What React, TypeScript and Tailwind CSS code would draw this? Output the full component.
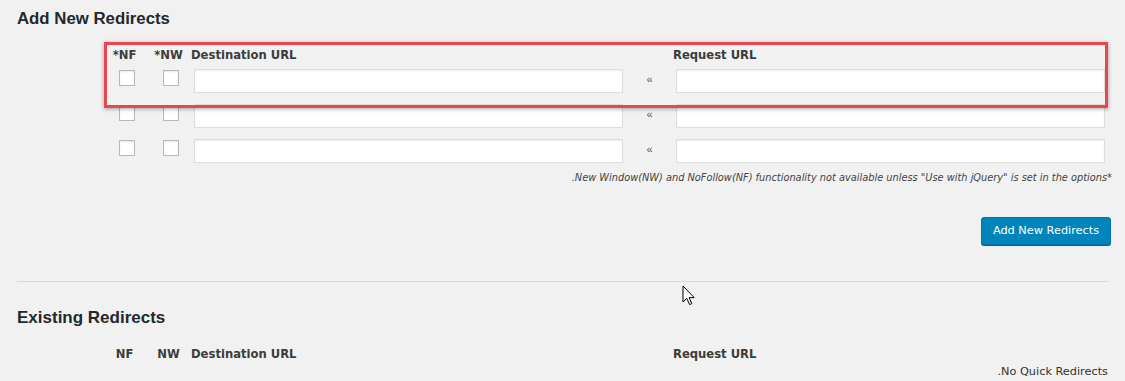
import type React from "react";

const FieldRow: React.FC = () => (
  <div className="flex items-start h-[24px]">
    <div className="w-[102px] shrink-0" />
    <input
      type="checkbox"
      className="appearance-none w-4 h-4 mt-[1px] shrink-0 border border-[#b4b9be] bg-white shadow-[inset_0_1px_2px_rgba(0,0,0,0.1)]"
    />
    <div className="w-[28px] shrink-0" />
    <input
      type="checkbox"
      className="appearance-none w-4 h-4 mt-[1px] shrink-0 border border-[#b4b9be] bg-white shadow-[inset_0_1px_2px_rgba(0,0,0,0.1)]"
    />
    <div className="w-[15px] shrink-0" />
    <input
      type="text"
      className="w-[429px] h-[24px] shrink-0 border border-[#ddd] bg-white shadow-[inset_0_1px_2px_rgba(0,0,0,0.07)] outline-none"
    />
    <div className="w-[53px] shrink-0 text-center text-[11px] leading-[20px] text-[#555] font-['Liberation_Sans',Arial,sans-serif]">«</div>
    <input
      type="text"
      className="w-[429px] h-[24px] shrink-0 border border-[#ddd] bg-white shadow-[inset_0_1px_2px_rgba(0,0,0,0.07)] outline-none"
    />
  </div>
);

const App: React.FC = () => {
  return (
    <div className="relative w-[1125px] h-[381px] overflow-hidden bg-[#f1f1f1] pl-[17px] pr-[14px] font-['DejaVu_Sans',sans-serif] text-[#444]">
      {/* Add new */}
      <h2 className="pt-[10px] h-[28px] text-[16.8px] leading-[18px] font-bold text-[#23282d] font-['Liberation_Sans',Arial,sans-serif]">
        Add New Redirects
      </h2>

      <div className="flex mt-[20px] h-[14px] text-[11.6px] leading-[14px] font-bold text-[#3c3c3c]">
        <div className="w-[88px] shrink-0" />
        <div className="w-[39px] shrink-0 text-center">*NF</div>
        <div className="w-[2px] shrink-0" />
        <div className="w-[45px] shrink-0 text-center">*NW</div>
        <div className="w-[482px] shrink-0">Destination URL</div>
        <div>Request URL</div>
      </div>

      <div className="flex flex-col gap-[11px] mt-[7px]">
        <FieldRow />
        <FieldRow />
        <FieldRow />
      </div>

      <p className="mt-[8px] -mr-[1px] h-[14px] text-right text-[9.8px] leading-[14px] italic text-[#444]">
        .New Window(NW) and NoFollow(NF) functionality not available unless "Use with jQuery" is set in the options*
      </p>

      <div className="flex justify-end mt-[32px]">
        <button className="w-[130px] h-[28px] rounded-[3px] border border-[#0073aa] bg-[#0085ba] shadow-[0_1px_0_#006799] text-white text-[11.3px] leading-[26px]">
          Add New Redirects
        </button>
      </div>

      <div className="mt-[36px] mr-[2px] border-t border-[#d8d8d8]" />

      {/* Existing */}
      <h2 className="mt-[27px] h-[18px] text-[17px] leading-[18px] font-bold text-[#23282d] font-['Liberation_Sans',Arial,sans-serif]">
        Existing Redirects
      </h2>

      <div className="flex mt-[20px] h-[14px] text-[11.6px] leading-[14px] font-bold text-[#3c3c3c]">
        <div className="w-[88px] shrink-0" />
        <div className="w-[39px] shrink-0 text-center">NF</div>
        <div className="w-[2px] shrink-0" />
        <div className="w-[45px] shrink-0 text-center">NW</div>
        <div className="w-[482px] shrink-0">Destination URL</div>
        <div>Request URL</div>
      </div>

      <p className="mt-[4px] mr-[3px] h-[14px] text-right text-[11.3px] leading-[14px] text-[#333]">
        .No Quick Redirects
      </p>

      {/* annotation box */}
      <div className="absolute left-[104px] top-[42px] w-[1004px] h-[66px] border-[3px] border-[#e8474c] shadow-[0_1px_4px_rgba(0,0,0,0.35)] pointer-events-none" />

      {/* mouse pointer */}
      <svg className="absolute left-[682px] top-[285px]" width="14" height="21" viewBox="0 0 14 21">
        <path
          d="M1 1 L1 17 L4.8 13.4 L7.6 19.6 L9.8 18.6 L7.1 12.6 L12.2 12.6 Z"
          fill="#fff"
          stroke="#000"
          strokeWidth="1"
          strokeLinejoin="miter"
        />
      </svg>
    </div>
  );
};

export default App;
